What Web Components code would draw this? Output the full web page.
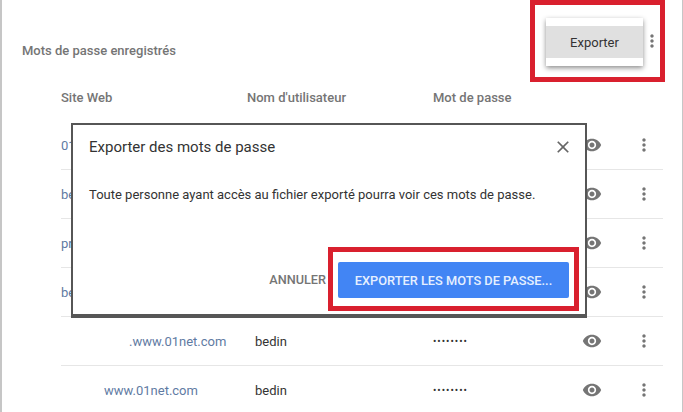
<!DOCTYPE html>
<html lang="fr">
<head>
<meta charset="utf-8">
<title>Mots de passe</title>
<style>
  html, body { margin: 0; background: #fff; }
  body { font-family: Roboto, "Liberation Sans", sans-serif; }
</style>
</head>
<body>
<pw-page>
  <pw-row slot="rows" indent="0">01</pw-row>
  <pw-row slot="rows" indent="0">be</pw-row>
  <pw-row slot="rows" indent="0">pr</pw-row>
  <pw-row slot="rows" indent="0">be</pw-row>
  <pw-row slot="rows" indent="68" user="bedin" secret>.www.01net.com</pw-row>
  <pw-row slot="rows" indent="43" user="bedin" secret>www.01net.com</pw-row>
  <pw-menu slot="overlay">Exporter</pw-menu>
  <pw-dialog slot="overlay" heading="Exporter des mots de passe" action="Exporter les mots de passe..." cancel="Annuler">
    Toute personne ayant accès au fichier exporté pourra voir ces mots de passe.
  </pw-dialog>
</pw-page>

<script>
// icones material, meme viewBox partout
const ICONS = {
  eye: 'M12 4.5C7 4.5 2.73 7.61 1 12c1.73 4.39 6 7.5 11 7.5s9.27-3.11 11-7.5c-1.73-4.39-6-7.5-11-7.5zM12 17c-2.76 0-5-2.24-5-5s2.24-5 5-5 5 2.24 5 5-2.24 5-5 5zm0-8c-1.66 0-3 1.34-3 3s1.34 3 3 3 3-1.34 3-3-1.34-3-3-3z',
  more: 'M12 8c1.1 0 2-.9 2-2s-.9-2-2-2-2 .9-2 2 .9 2 2 2zm0 2c-1.1 0-2 .9-2 2s.9 2 2 2 2-.9 2-2-.9-2-2-2zm0 6c-1.1 0-2 .9-2 2s.9 2 2 2 2-.9 2-2-.9-2-2-2z',
  close: 'M19 6.41L17.59 5 12 10.59 6.41 5 5 6.41 10.59 12 5 17.59 6.41 19 12 13.41 17.59 19 19 17.59 13.41 12z'
};

class PwIcon extends HTMLElement {
  connectedCallback() {
    if (this.shadowRoot) return;
    const size = this.getAttribute('size') || 20;
    const color = this.getAttribute('color') || '#757575';
    this.attachShadow({ mode: 'open' }).innerHTML = `
      <style>
        :host { display: block; width: ${size}px; height: ${size}px; }
        svg { display: block; width: 100%; height: 100%; fill: ${color}; }
      </style>
      <svg viewBox="0 0 24 24"><path d="${ICONS[this.getAttribute('name')]}"></path></svg>`;
  }
}

class PwRow extends HTMLElement {
  connectedCallback() {
    if (this.shadowRoot) return;
    const indent = this.getAttribute('indent') || 0;
    // les lignes sous le dialogue n'affichent ni utilisateur ni mot de passe
    const user = this.getAttribute('user') || '';
    const dots = this.hasAttribute('secret') ? '••••••••' : '';
    this.attachShadow({ mode: 'open' }).innerHTML = `
      <style>
        :host {
          display: grid;
          grid-template-columns: 186px 186px 1fr 66px 38px;
          align-items: center;
          height: 49px;
          box-sizing: border-box;
          border-bottom: 1px solid #e6e6e6;
          font-size: 13px;
          color: #333;
        }
        .site { padding-left: ${indent}px; color: #5f7ba3; white-space: nowrap; }
        .user { padding-left: 8px; }
        .dots { padding-top: 1px; font-size: 10px; letter-spacing: 1px; line-height: 1; color: #333; }
        .btn { display: flex; justify-content: center; }
      </style>
      <div class="site"><slot></slot></div>
      <div class="user">${user}</div>
      <div class="dots">${dots}</div>
      <div class="btn"><pw-icon name="eye"></pw-icon></div>
      <div class="btn"><pw-icon name="more"></pw-icon></div>`;
  }
}

class PwPage extends HTMLElement {
  connectedCallback() {
    if (this.shadowRoot) return;
    this.attachShadow({ mode: 'open' }).innerHTML = `
      <style>
        :host {
          display: block;
          position: relative;
          width: 683px;
          height: 412px;
          box-sizing: border-box;
          overflow: hidden;
          border-left: 2px solid #c6c6c6;
          border-right: 1px solid #c6c6c6;
          background: #fff;
          font-family: Roboto, "Liberation Sans", sans-serif;
        }
        header {
          display: flex;
          justify-content: space-between;
          align-items: center;
          height: 40px;
          padding: 30px 20px 0 20px;
          font-size: 13px;
          font-weight: 500;
          color: #757575;
        }
        header pw-icon { margin-bottom: 18px; }
        .table { margin: 0 19px 0 59px; }
        .heads {
          display: grid;
          grid-template-columns: 186px 186px 1fr;
          align-items: center;
          height: 48px;
          padding-top: 3px;
          font-size: 13px;
          font-weight: 500;
          color: #757575;
        }
      </style>
      <header>
        <span>Mots de passe enregistrés</span>
        <pw-icon name="more" size="20"></pw-icon>
      </header>
      <div class="table">
        <div class="heads"><span>Site Web</span><span>Nom d'utilisateur</span><span>Mot de passe</span></div>
        <slot name="rows"></slot>
      </div>
      <slot name="overlay"></slot>`;
  }
}

class PwMenu extends HTMLElement {
  connectedCallback() {
    if (this.shadowRoot) return;
    this.attachShadow({ mode: 'open' }).innerHTML = `
      <style>
        :host {
          display: block;
          position: absolute;
          left: 528px;
          top: 0;
          width: 125px;
          height: 72px;
          border: 5px solid #d9202e;
        }
        .menu {
          position: absolute;
          left: 11px;
          top: 13px;
          width: 97px;
          height: 48px;
          padding: 8px 0;
          box-sizing: border-box;
          background: #fff;
          box-shadow: 0 2px 5px rgba(0,0,0,.45);
        }
        .item {
          height: 32px;
          display: flex;
          align-items: center;
          justify-content: center;
          background: #e0e0e0;
          font-size: 13px;
          color: #333;
        }
      </style>
      <div class="menu"><div class="item"><slot></slot></div></div>`;
  }
}

class PwDialog extends HTMLElement {
  connectedCallback() {
    if (this.shadowRoot) return;
    this.attachShadow({ mode: 'open' }).innerHTML = `
      <style>
        :host {
          display: flex;
          flex-direction: column;
          position: absolute;
          left: 69px;
          top: 123px;
          width: 516px;
          height: 195px;
          box-sizing: border-box;
          background: #fff;
          border: solid #565656;
          border-width: 2px 2px 4px 2px;
        }
        .head {
          display: flex;
          justify-content: space-between;
          align-items: center;
          height: 44px;
          padding: 0 12px 0 16px;
          font-size: 15px;
          color: #333;
        }
        .body {
          padding: 17px 16px 0;
          font-size: 13px;
          line-height: 18px;
          color: #333;
        }
        .foot {
          margin-top: auto;
          display: flex;
          justify-content: flex-end;
          align-items: center;
          padding: 0 6px 3px 0;
        }
        .cancel {
          margin-right: 2px;
          font-size: 12.7px;
          font-weight: 500;
          color: #757575;
          text-transform: uppercase;
        }
        .mark {
          padding: 10px 5px 8px 5px;
          border: 5px solid #d9202e;
        }
        .action {
          width: 231px;
          height: 36px;
          display: flex;
          align-items: center;
          justify-content: center;
          border-radius: 2px;
          background: #4285f4;
          color: #e6f0ff;
          font-size: 12.8px;
          font-weight: 500;
          text-transform: uppercase;
          white-space: nowrap;
        }
      </style>
      <div class="head">
        <span>${this.getAttribute('heading')}</span>
        <pw-icon name="close" size="20" color="#666"></pw-icon>
      </div>
      <div class="body"><slot></slot></div>
      <div class="foot">
        <span class="cancel">${this.getAttribute('cancel')}</span>
        <div class="mark"><div class="action">${this.getAttribute('action')}</div></div>
      </div>`;
  }
}

customElements.define('pw-icon', PwIcon);
customElements.define('pw-row', PwRow);
customElements.define('pw-menu', PwMenu);
customElements.define('pw-dialog', PwDialog);
customElements.define('pw-page', PwPage);
</script>
</body>
</html>
